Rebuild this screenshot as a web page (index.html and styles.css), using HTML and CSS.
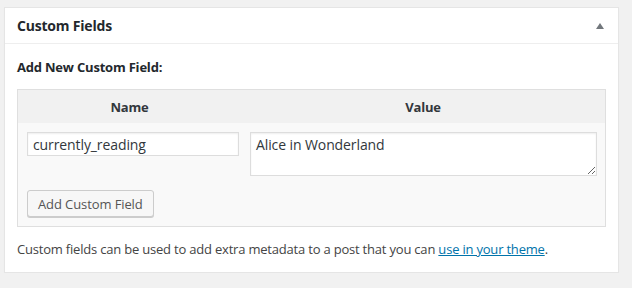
FILE: index.html
```html
<!DOCTYPE html>
<html>
<head>
<meta charset="utf-8">
<link rel="stylesheet" href="styles.css">
</head>
<body>
<div class="postbox">
  <div class="postbox-header">
    <h2 class="postbox-title">Custom Fields</h2>
    <span class="toggle"></span>
  </div>
  <div class="inside">
    <p class="add-label">Add New Custom Field:</p>
    <div class="newmeta">
      <div class="meta-head">
        <div class="th th-name">Name</div>
        <div class="th th-value">Value</div>
      </div>
      <div class="meta-body">
        <div class="meta-row">
          <input class="meta-key" type="text" value="currently_reading">
          <textarea class="meta-value">Alice in Wonderland</textarea>
        </div>
        <button class="button" type="button">Add Custom Field</button>
      </div>
    </div>
    <p class="note">Custom fields can be used to add extra metadata to a post that you can <a href="#">use in your theme</a>.</p>
  </div>
</div>
</body>
</html>
```
FILE: styles.css
```css
html, body {
  margin: 0;
  padding: 0;
  background: #f1f1f1;
}
body {
  font-family: "Open Sans", "Noto Sans", sans-serif;
  font-size: 13px;
  color: #444;
  padding: 7px 13px 0 4px;
}
.postbox {
  background: #fff;
  border: 1px solid #e5e5e5;
  box-shadow: 0 1px 1px rgba(0,0,0,.04);
  height: 264px;
  box-sizing: content-box;
}
.postbox-header {
  display: flex;
  align-items: center;
  justify-content: space-between;
  height: 35px;
  border-bottom: 1px solid #eee;
  padding: 0 12px;
}
.postbox-title {
  margin: 0;
  font-size: 14px;
  font-weight: 700;
  color: #23282d;
  line-height: 1.4;
  letter-spacing: -0.2px;
}
.toggle {
  width: 0;
  height: 0;
  border-left: 4px solid transparent;
  border-right: 4px solid transparent;
  border-bottom: 6px solid #72777c;
  margin-right: 2px;
}
.inside {
  padding: 0 12px 12px;
}
.add-label {
  margin: 0;
  padding-top: 14px;
  height: 31px;
  line-height: 18px;
  font-weight: 700;
  color: #23282d;
  letter-spacing: -0.2px;
}
.newmeta {
  border: 1px solid #dfdfdf;
  background: #f9f9f9;
}
.meta-head {
  display: flex;
  background: #f1f1f1;
  height: 33px;
  align-items: center;
  font-weight: 700;
  color: #32373c;
  letter-spacing: -0.2px;
}
.th-name {
  width: 223px;
  text-align: center;
}
.th-value {
  flex: 1;
  text-align: center;
}
.meta-body {
  padding: 9px 8px 9px 9px;
}
.meta-row {
  display: flex;
  align-items: flex-start;
  gap: 11px;
}
.meta-key, .meta-value {
  font: inherit;
  font-size: 14px;
  color: #32373c;
  border: 1px solid #ddd;
  box-shadow: inset 0 1px 2px rgba(0,0,0,.07);
  background: #fff;
  box-sizing: border-box;
  margin: 0;
  outline: none;
  letter-spacing: -0.1px;
}
.meta-key {
  width: 212px;
  height: 24px;
  padding: 1px 5px;
}
.meta-value {
  flex: 1;
  height: 44px;
  padding: 2px 5px;
  resize: vertical;
}
.button {
  display: block;
  margin-top: 14px;
  height: 27px;
  padding: 0 10px;
  font: inherit;
  font-size: 13px;
  color: #555;
  background: #f7f7f7;
  border: 1px solid #ccc;
  border-radius: 3px;
  box-shadow: 0 1px 0 #ccc;
  box-sizing: border-box;
  cursor: pointer;
  letter-spacing: -0.1px;
}
.note {
  margin: 13px 0 0;
  line-height: 18px;
  letter-spacing: -0.2px;
}
.note a {
  color: #0073aa;
}
```
